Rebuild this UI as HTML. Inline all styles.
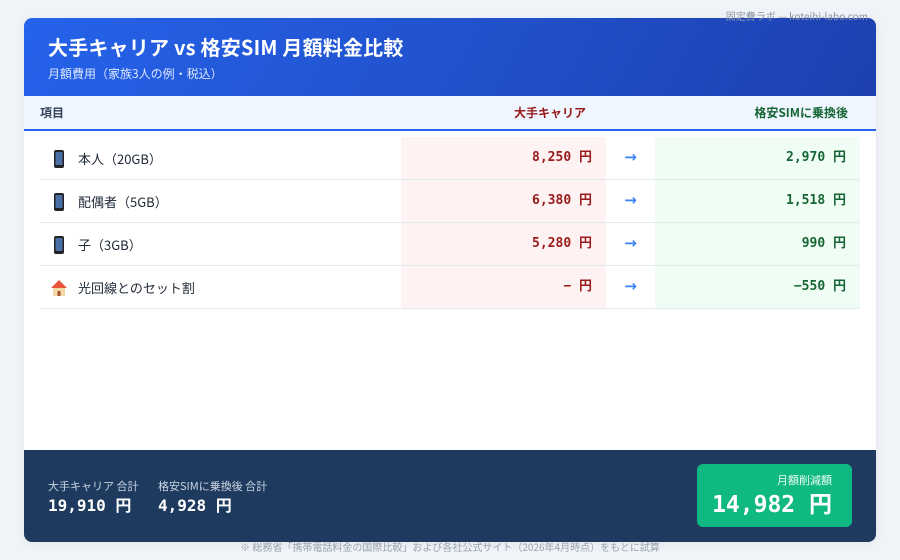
<!DOCTYPE html>
<html><head><meta charset="utf-8"><style>
*{margin:0;padding:0;box-sizing:border-box}
body{width:900px;height:560px;background:#f0f4f8;font-family:"Noto Sans CJK JP","Liberation Sans",sans-serif;position:relative;overflow:hidden;line-height:1.3}
.wm{position:absolute;right:32px;top:9px;font-size:10px;color:#8a94a3;z-index:3}
.card{position:absolute;left:24px;top:18px;width:852px;height:524px;background:#fff;border-radius:8px;overflow:hidden;box-shadow:0 2px 10px rgba(0,0,0,.06)}
.hd{height:78px;background:linear-gradient(120deg,#2563eb,#1e40af);padding:15px 24px;color:#fff}
.hd h1{font-size:20px;font-weight:bold;line-height:28px;letter-spacing:0.2px}
.hd p{font-size:12px;color:#dbe6ff;margin-top:5px;line-height:16px}
.th{height:35px;background:#eff6ff;border-bottom:2px solid #2563eb;position:relative;font-size:12px;font-weight:bold;line-height:16px}
.th span{position:absolute;top:9px}
.row{position:absolute;left:16px;width:820px;height:43px;border-bottom:1px solid #e2e8f0;font-size:13px;color:#1f2937;line-height:18px}
.lab{position:absolute;left:10px;top:13px;display:flex;align-items:center;gap:10px}
.red,.grn{position:absolute;width:205px;top:0;height:42px;font-family:"DejaVu Sans Mono","Noto Sans CJK JP",monospace;font-weight:bold;text-align:right;padding:12px 14px 0 0;font-size:13px}
.red{left:361px;background:#fef2f2;color:#991b1b}
.grn{left:615px;background:#f0fdf4;color:#166534}
.arr{position:absolute;left:566px;width:49px;top:11px;text-align:center;color:#3b82f6;font-size:15px;font-weight:bold;font-family:"DejaVu Sans",sans-serif}
.ft{position:absolute;left:0;top:432px;width:852px;height:92px;background:#1e3a5f;color:#fff}
.tot{position:absolute;top:29px;font-size:11px;color:#cbd5e1;line-height:14px}
.tot b{display:block;font-family:"DejaVu Sans Mono","Noto Sans CJK JP",monospace;font-size:16px;color:#fff;margin-top:3px;line-height:20px}
.sv{position:absolute;left:673px;top:14px;width:155px;height:63px;background:#10b981;border-radius:6px;text-align:right;padding:9px 20px 0 0}
.sv small{font-size:11px;color:#ecfdf5;display:block;line-height:14px}
.sv b{font-family:"DejaVu Sans Mono","Noto Sans CJK JP",monospace;font-size:23px;line-height:32px;display:block;margin-top:2px}
.note{position:absolute;left:0;width:900px;top:540px;text-align:center;font-size:10px;color:#9aa3ae}
</style></head><body>
<div class="wm">固定費ラボ — koteihi-labo.com</div>
<div class="card">
<div class="hd"><h1>大手キャリア vs 格安SIM 月額料金比較</h1><p>月額費用（家族3人の例・税込）</p></div>
<div class="th"><span style="left:16px;color:#334155">項目</span><span style="left:490px;color:#991b1b">大手キャリア</span><span style="right:28px;color:#166534">格安SIMに乗換後</span></div>
<div class="row" style="top:119px"><div class="lab"><svg width="18" height="18"><rect x="4" y="0" width="10" height="18" rx="2" fill="#222"/><rect x="5.5" y="2" width="7" height="13" fill="#4a6fa5"/></svg>本人（20GB）</div><div class="red">8,250 円</div><div class="arr">→</div><div class="grn">2,970 円</div></div>
<div class="row" style="top:162px"><div class="lab"><svg width="18" height="18"><rect x="4" y="0" width="10" height="18" rx="2" fill="#222"/><rect x="5.5" y="2" width="7" height="13" fill="#4a6fa5"/></svg>配偶者（5GB）</div><div class="red">6,380 円</div><div class="arr">→</div><div class="grn">1,518 円</div></div>
<div class="row" style="top:205px"><div class="lab"><svg width="18" height="18"><rect x="4" y="0" width="10" height="18" rx="2" fill="#222"/><rect x="5.5" y="2" width="7" height="13" fill="#4a6fa5"/></svg>子（3GB）</div><div class="red">5,280 円</div><div class="arr">→</div><div class="grn">990 円</div></div>
<div class="row" style="top:248px"><div class="lab"><svg width="18" height="18"><path d="M1 9L9 1L17 9Z" fill="#e8553d"/><rect x="3" y="9" width="12" height="8" fill="#f3d9a8"/><rect x="7.5" y="12" width="3" height="5" fill="#a0522d"/></svg>光回線とのセット割</div><div class="red">− 円</div><div class="arr">→</div><div class="grn">−550 円</div></div>
<div class="ft">
<div class="tot" style="left:24px">大手キャリア 合計<b>19,910 円</b></div>
<div class="tot" style="left:134px">格安SIMに乗換後 合計<b>4,928 円</b></div>
<div class="sv"><small>月額削減額</small><b>14,982 円</b></div>
</div>
</div>
<div class="note">※ 総務省「携帯電話料金の国際比較」および各社公式サイト（2026年4月時点）をもとに試算</div>
</body></html>
